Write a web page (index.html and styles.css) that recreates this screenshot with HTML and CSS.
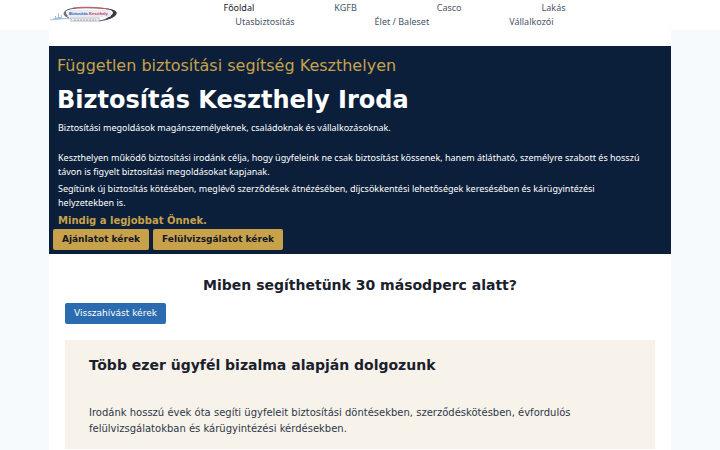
FILE: index.html
```html
<!DOCTYPE html>
<html lang="hu">
<head>
  <meta charset="UTF-8">
  <meta name="viewport" content="width=device-width, initial-scale=1.0">
  <title>Biztosítás Keszthely Iroda</title>
  <link rel="stylesheet" href="styles.css">
</head>
<body>
  <header class="site-header">
    <div class="header-inner">
      <a class="logo" href="#" aria-label="Biztosítás Keszthely">
        <svg viewBox="0 0 69 18" width="69" height="18">
          <!-- skyline -->
          <path d="M3 13 L6 12 V10 H7 V12 L9 11 V8 L10 7 V11 L12 11 V9 H13 V12 L16 13 Z" fill="#9fc0dc"/>
          <path d="M1 14 Q18 11 34 14" fill="none" stroke="#a9c4dd" stroke-width="1"/>
          <!-- ring -->
          <path d="M20 12 Q12 8 18 4 Q24 1 48 2 Q68 3 67 7 Q65 13 50 15" fill="none" stroke="#5b5d65" stroke-width="1"/>
          <path d="M60 3 Q70 5 67 9 Q64 13 54 14 Q63 10 64 7 Q64 5 60 3 Z" fill="#393b42"/>
          <path d="M24 2 Q40 0 60 3" fill="none" stroke="#d05a5a" stroke-width="1"/>
          <path d="M17 11 Q11 7 19 3 Q15 6 19 10 Z" fill="#6f737c"/>
          <rect x="19" y="4" width="43" height="7" rx="2" fill="#e6ebf5"/>
          <text x="20" y="9" class="logo-name" fill="#2860a8">Biztosítás <tspan fill="#c8323c">Keszthely</tspan></text>
          <rect x="22" y="12" width="28" height="3" fill="#f4f4f6" stroke="#b6bac2" stroke-width="1"/>
          <path d="M25 14 H47" stroke="#a0a4ac" stroke-width="1" stroke-dasharray="2 1"/>
        </svg>
      </a>
      <nav class="main-nav">
        <a class="active" href="#">Főoldal</a>
        <a href="#">KGFB</a>
        <a href="#">Casco</a>
        <a href="#">Lakás</a>
        <a href="#">Utasbiztosítás</a>
        <a href="#">Élet / Baleset</a>
        <a href="#">Vállalkozói</a>
      </nav>
    </div>
  </header>

  <main class="content">
    <section class="hero">
      <p class="hero-kicker">Független biztosítási segítség Keszthelyen</p>
      <h1>Biztosítás Keszthely Iroda</h1>
      <div class="hero-text">
        <p class="lead">Biztosítási megoldások magánszemélyeknek, családoknak és vállalkozásoknak.</p>
        <p>Keszthelyen működő biztosítási irodánk célja, hogy ügyfeleink ne csak biztosítást kössenek, hanem átlátható, személyre szabott és hosszú távon is figyelt biztosítási megoldásokat kapjanak.</p>
        <p>Segítünk új biztosítás kötésében, meglévő szerződések átnézésében, díjcsökkentési lehetőségek keresésében és kárügyintézési helyzetekben is.</p>
        <p class="slogan">Mindig a legjobbat Önnek.</p>
      </div>
      <div class="hero-buttons">
        <button type="button" class="btn btn-gold">Ajánlatot kérek</button>
        <button type="button" class="btn btn-gold">Felülvizsgálatot kérek</button>
      </div>
    </section>

    <section class="help">
      <h2>Miben segíthetünk 30 másodperc alatt?</h2>
      <button type="button" class="btn btn-blue">Visszahívást kérek</button>
      <div class="trust">
        <h2>Több ezer ügyfél bizalma alapján dolgozunk</h2>
        <p>Irodánk hosszú évek óta segíti ügyfeleit biztosítási döntésekben, szerződéskötésben, évfordulós felülvizsgálatokban és kárügyintézési kérdésekben.</p>
      </div>
    </section>
  </main>
</body>
</html>
```
FILE: styles.css
```css
* {
  box-sizing: border-box;
}

body {
  margin: 0;
  font-family: "DejaVu Sans", sans-serif;
  background-color: #f7fafc;
  color: #1a202c;
}

h1, h2, p {
  margin: 0;
}

/* Header */
.site-header {
  background-color: white;
}

.header-inner {
  display: flex;
  align-items: center;
  height: 30px;
  margin: 0 49px;
}

.logo {
  flex: none;
  display: flex;
}

.logo-name {
  font-family: "Liberation Sans", sans-serif;
  font-size: 4px;
  font-weight: bold;
}

.main-nav {
  flex: 1;
  display: flex;
  flex-wrap: wrap;
  justify-content: center;
}

.main-nav a {
  padding: 0 40px;
  font-family: "Noto Sans", sans-serif;
  font-size: 9px;
  line-height: 14px;
  color: #4a5568;
  text-decoration: none;
}

.main-nav a.active {
  color: #1a202c;
}

/* Hero */
.content {
  margin: 0 49px;
  padding-top: 16px;
  background-color: white;
}

.hero {
  padding: 8px 4px 4px;
  background-color: #0b1f3a;
  color: white;
}

.hero-kicker {
  padding: 0 4px;
  font-size: 16px;
  line-height: 24px;
  color: #c8a24a;
}

.hero h1 {
  padding: 0 4px;
  margin-top: 4px;
  font-size: 24px;
  line-height: 36px;
}

.hero-text {
  padding: 3px 18px 1px 5px;
  font-family: "Noto Sans", sans-serif;
  font-size: 9px;
  line-height: 14px;
}

.hero-text p {
  margin-bottom: 3px;
}

.hero-text .lead {
  margin-bottom: 16px;
}

.hero-text .slogan {
  margin: 0;
  font-family: "DejaVu Sans", sans-serif;
  font-size: 10px;
  font-weight: bold;
  line-height: 15px;
  color: #c8a24a;
}

.hero-buttons {
  display: flex;
  gap: 4px;
}

.btn {
  padding: 0 9px;
  border: none;
  border-radius: 2px;
  font-family: inherit;
  font-size: 9px;
  line-height: 21px;
  cursor: pointer;
}

.btn-gold {
  background-color: #c8a24a;
  color: #111827;
  font-weight: bold;
}

.btn-blue {
  background-color: #2b6cb0;
  color: white;
}

/* Content below the hero */
.help {
  padding: 21px 16px 1px;
}

.help h2 {
  font-size: 14px;
  line-height: 21px;
  text-align: center;
}

.help .btn-blue {
  margin: 7px 0 16px;
}

.trust {
  padding: 15px 24px 12px;
  background-color: #f8f3ea;
}

.trust h2 {
  margin-bottom: 29px;
  text-align: left;
}

.trust p {
  font-size: 10px;
  line-height: 16px;
  color: #2d3748;
}
```
